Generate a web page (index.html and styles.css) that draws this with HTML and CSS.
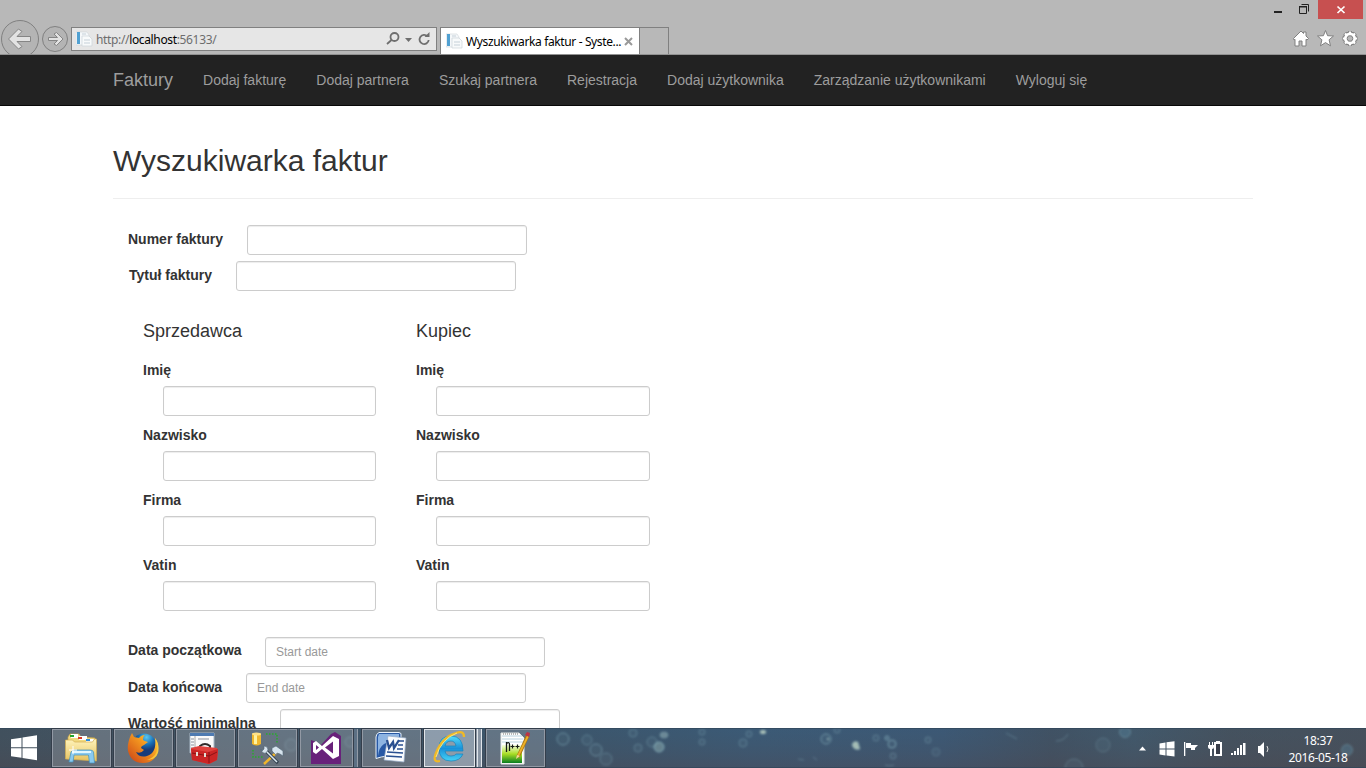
FILE: index.html
```html
<!DOCTYPE html>
<html lang="pl">
<head>
<meta charset="utf-8">
<title>Wyszukiwarka faktur</title>
<link rel="stylesheet" href="styles.css">
</head>
<body>
<div class="screen">
<header class="chrome">
  <div class="nav-buttons">
    <svg width="71" height="54" viewBox="0 0 71 54">
      <g fill="#b4b4b4" stroke="#808080"><circle cx="20" cy="39" r="18.5"/><circle cx="55" cy="39" r="12.5"/></g>
      <g fill="#e2e2e2" stroke="#858585" stroke-linejoin="round">
        <path d="M8.500 39l10-10 3.500 2.500-5 5h13.500v5H17l5 5-3.500 2.500z"/>
        <path d="M63 39l-6.500-6.500-2.500 1.500 3.500 3.500h-9v3h9L54 44l2.500 1.500z"/>
      </g>
    </svg>
  </div>
  <div class="address">
    <svg class="page-icon" width="17" height="16" viewBox="0 0 17 16"><path d="M0 1h11l2 3v10H0z" fill="#f5f8fa" stroke="#ced4d8" stroke-width=".6"/><path d="M1 1h3v12H1z" fill="#51a1d2"/><path d="M6 5h7l3 3v7H6z" fill="#f8fafb" stroke="#ccd3d8" stroke-width=".7"/><path d="M8 9h6M8 12h6M6 3h4" stroke="#c5d0d8"/></svg>
    <span class="url">http://<b>localhost</b>:56133/</span>
    <svg class="address-tools" width="50" height="22" viewBox="0 0 50 22"><g fill="none" stroke="#6e6e6e" stroke-width="1.800"><circle cx="8.500" cy="9" r="4"/><path d="M5.500 12L1 16"/><path d="M41.500 8.300A4.600 4.600 0 1 0 42.700 12"/></g><path d="M19 10h7l-3.500 4zM38.500 9h5V4z" fill="#6e6e6e"/></svg>
  </div>
  <div class="tab">
    <svg class="page-icon" width="17" height="16" viewBox="0 0 17 16"><path d="M0 1h11l2 3v10H0z" fill="#f5f8fa" stroke="#ced4d8" stroke-width=".6"/><path d="M1 1h3v12H1z" fill="#51a1d2"/><path d="M6 5h7l3 3v7H6z" fill="#f8fafb" stroke="#ccd3d8" stroke-width=".7"/><path d="M8 9h6M8 12h6M6 3h4" stroke="#c5d0d8"/></svg>
    <span class="tab-title">Wyszukiwarka faktur - Syste...</span>
    <svg class="tab-close" width="9" height="9" viewBox="0 0 9 9"><path d="M1 1l7 7M8 1L1 8" stroke="#999" stroke-width="2"/></svg>
  </div>
  <div class="new-tab"></div>
  <svg class="window-tools" width="126" height="54" viewBox="0 0 126 54">
    <path d="M78 0h45v19H78z" fill="#c75050"/>
    <path d="M34 11h8v2h-8z" fill="#222"/>
    <path d="M59.500 6.500h7v7h-7zM61.500 4.500h7v7" fill="none" stroke="#222"/><path d="M59 6h8v1.500h-8z" fill="#222"/>
    <path d="M97.500 6.500l7 6.500m0-6.500l-7 6.500" stroke="#fff" stroke-width="1.700"/>
    <g fill="#fff" stroke="#808080" stroke-linejoin="round">
      <path d="M53.500 38.500l7.500-7.500 2.500 2.500V32h2.500v4l2.500 2.500-1.500 1.500-1-.7V46h-4v-5h-3v5h-4v-6.700l-1 .7z"/>
      <path d="M85.500 30.500l2.100 5.200 5.900.3-4.400 3.800 1.400 6-5-3.200-5 3.200 1.400-6-4.400-3.800 5.900-.3z"/>
    </g>
    <g fill="none"><path d="M110 31v15M102.500 38.500h15M104.700 33.200l10.600 10.600M115.300 33.200l-10.600 10.600" stroke="#808080" stroke-width="4"/><circle cx="110" cy="38.500" r="4.800" stroke="#808080" stroke-width="4.500"/><path d="M110 31.500v14M103 38.500h14M105 33.500l10 10M115 33.500l-10 10" stroke="#fff" stroke-width="2.200"/><circle cx="110" cy="38.500" r="4.700" stroke="#fff" stroke-width="2.700"/></g><circle cx="110" cy="38.500" r="2.800" fill="#b8b8b8" stroke="#808080"/>
  </svg>
</header>

<main class="viewport">
  <nav class="navbar">
    <a class="brand">Faktury</a>
    <a>Dodaj fakturę</a><a>Dodaj partnera</a><a>Szukaj partnera</a><a>Rejestracja</a><a>Dodaj użytkownika</a><a>Zarządzanie użytkownikami</a><a>Wyloguj się</a>
  </nav>
  <section class="content">
    <h1>Wyszukiwarka faktur</h1>
    <form class="search">
      <div class="row number"><label>Numer faktury</label><input type="text"></div>
      <div class="row title"><label>Tytuł faktury</label><input type="text"></div>
      <div class="parties">
        <div class="party">
          <h2>Sprzedawca</h2>
          <div class="field"><label>Imię</label><input type="text"></div>
          <div class="field"><label>Nazwisko</label><input type="text"></div>
          <div class="field"><label>Firma</label><input type="text"></div>
          <div class="field"><label>Vatin</label><input type="text"></div>
        </div>
        <div class="party buyer">
          <h2>Kupiec</h2>
          <div class="field"><label>Imię</label><input type="text"></div>
          <div class="field"><label>Nazwisko</label><input type="text"></div>
          <div class="field"><label>Firma</label><input type="text"></div>
          <div class="field"><label>Vatin</label><input type="text"></div>
        </div>
      </div>
      <div class="row start"><label>Data początkowa</label><input type="text" placeholder="Start date"></div>
      <div class="row end"><label>Data końcowa</label><input type="text" placeholder="End date"></div>
      <div class="row minimum"><label>Wartość minimalna</label><input type="text"></div>
    </form>
  </section>
</main>

<footer class="taskbar">
  <svg class="wallpaper" width="1366" height="40" viewBox="0 0 1366 40">
    <defs>
      <linearGradient id="sea"><stop offset="0" stop-color="#424b57"/><stop offset=".2" stop-color="#435365"/><stop offset=".42" stop-color="#3b536c"/><stop offset=".55" stop-color="#3b5878"/><stop offset=".69" stop-color="#3c5677"/><stop offset=".77" stop-color="#414d60"/><stop offset=".83" stop-color="#43566a"/><stop offset=".9" stop-color="#474d59"/><stop offset="1" stop-color="#494b56"/></linearGradient>
      <linearGradient id="depth" x2="0" y2="1"><stop offset="0" stop-color="#3c6070" stop-opacity=".25"/><stop offset="1" stop-color="#4a4c55" stop-opacity=".5"/></linearGradient>
      <filter id="soft"><feGaussianBlur stdDeviation=".8"/></filter>
    </defs>
    <path d="M0 0h1366v40H0z" fill="url(#sea)"/><path d="M0 0h1366v40H0z" fill="url(#depth)"/>
    <g filter="url(#soft)" fill="#6794a4" fill-opacity=".1" stroke="#80a9b7" stroke-opacity=".42">
      <circle cx="291" cy="17" r="6"/><circle cx="350" cy="14" r="5"/><circle cx="563" cy="11" r="6" stroke-opacity=".65"/><circle cx="587" cy="12" r="5"/><circle cx="596" cy="22" r="6" stroke-opacity=".6"/><circle cx="606" cy="31" r="6"/><circle cx="633" cy="5" r="4"/><circle cx="638" cy="20" r="4"/><circle cx="652" cy="14" r="5"/><circle cx="702" cy="4" r="3"/><circle cx="702" cy="14" r="3"/><circle cx="749" cy="6" r="3"/><circle cx="743" cy="15" r="4"/><circle cx="826" cy="11" r="5" stroke-opacity=".7"/><circle cx="837" cy="2" r="3"/><circle cx="876" cy="10" r="3"/><circle cx="892" cy="16" r="4" stroke-opacity=".8"/><circle cx="893" cy="28" r="3"/><path d="M885 37q4 2 9 0"/><circle cx="928" cy="12" r="3"/><circle cx="936" cy="24" r="4" stroke-opacity=".25"/><circle cx="1103" cy="17" r="7" stroke-opacity=".3"/><circle cx="1074" cy="40" r="9" stroke-opacity=".35"/>
      <path d="M1006 5l11 6M1068 6q-4 7-12 7M798 31l6 1M813 29l4 3" fill="none"/>
      <ellipse cx="664" cy="7" rx="4" ry="3" fill="#9bbabc" fill-opacity=".5"/><circle cx="659" cy="19" r="5" fill="#8daeb1" fill-opacity=".5" stroke-opacity=".9"/><ellipse cx="763" cy="4" rx="3" ry="2" fill="#b6cabc" fill-opacity=".9"/><path d="M852 17q1-5 6-3l2 7q-6 2-8-4z" fill="#b0c8bd" fill-opacity=".9"/><circle cx="887" cy="10" r="2" stroke-opacity=".9"/><circle cx="828" cy="11" r="1" fill="#b6cabc" fill-opacity=".8"/>
      <circle cx="1125" cy="4" r="5.500" fill="#527e96" fill-opacity=".45"/><circle cx="1347" cy="22" r="5.500" fill="#527e96" fill-opacity=".45"/>
    </g>
    <g fill="none" stroke="#30465a" stroke-opacity=".7"><path d="M0 .5h1366M0 39.500h1366"/></g>
  </svg>
  <div class="start-button"><svg width="52" height="40" viewBox="0 0 52 40"><path d="M11 11.300l10.500-1.500v9.500H11zM22.500 9.600L37 7.300v12H22.500zM11 20.300h10.500v9.500L11 28.300zM22.500 20.300H37v12l-14.500-2.300z" fill="#fff"/></svg></div>
  <div class="apps">
    <div class="app"><svg width="58" height="40" viewBox="0 0 58 40"><defs><linearGradient id="folder" x2="0" y2="1"><stop stop-color="#fff4bc"/><stop offset="1" stop-color="#e6c260"/></linearGradient></defs><path d="M16 9l2-3h9l2 3 14 1v20H16z" fill="#f1d97f" stroke="#c7a348" stroke-width=".7"/><path d="M19 6h7v4h-7zM27 8h8v4h-8zM34 11h8v3h-8z" fill="#fff"/><path d="M18 7h4v2h-4z" fill="#25a52c"/><path d="M26 9h4v2h-4z" fill="#d93a27"/><path d="M34 11h4v2h-4z" fill="#2d8ddd"/><path d="M13.500 12h7l2 2h18l2-3h2v22l-31-2z" fill="url(#folder)" stroke="#d2ae51" stroke-width=".7"/><path d="M17 34l2-10q1-2 4-2h15q3 0 3.500 2l1 11h-5l-1-8H22l-1 7z" fill="#8acaf0" stroke="#4091bd" stroke-width=".7"/><path d="M20 24h19" stroke="#e1f7ff" stroke-width="2"/><path d="M21 18v8M17 22h8" stroke="#fff"/></svg></div>
    <div class="app"><svg width="58" height="40" viewBox="0 0 58 40"><defs><radialGradient id="globe" cx=".6" cy=".15"><stop stop-color="#5cc8ef"/><stop offset=".6" stop-color="#176fb6"/><stop offset="1" stop-color="#173c7b"/></radialGradient><linearGradient id="fox" x1="1" x2="0" y2="1"><stop stop-color="#ffe451"/><stop offset=".4" stop-color="#f59b20"/><stop offset="1" stop-color="#c93e16"/></linearGradient></defs><circle cx="30" cy="18" r="12.500" fill="url(#globe)"/><path d="M16 9q-3 8-2 14 3 12 15 12 13 0 15-14 1-6-3-11 2 15-8 18-8 2-11-4 5 2 8-2l-3-2q0-2 3-3l4-3q-4-1-5-2 0-4 2-5-4 0-6 3l-5-1-2-4z" fill="url(#fox)"/><path d="M41 10q7 17-8 22 14-1 11-16z" fill="#f7c83b"/></svg></div>
    <div class="app"><svg width="58" height="40" viewBox="0 0 58 40"><path d="M14 5h24v20H14z" fill="#fafafa" stroke="#a7b7c5"/><path d="M14 5h24v3H14z" fill="#4e7bb2"/><path d="M19 8v19" stroke="#aaa"/><path d="M15 11h3M15 14h3M15 17h3M15 20h3M22 11h11" stroke="#8b929e"/><path d="M24 20v-2q5-4 10 0v3" fill="none" stroke="#302a2a" stroke-width="2"/><path d="M15 20l8-2 18 2 1 3-1 9-8 4-17-4z" fill="#e0413d"/><path d="M15 21l17 3 10-3-1 11-8 4-17-4z" fill="#cb2525"/><path d="M16 25l17 3 8-4M33 24v11" fill="none" stroke="#8a1315"/><path d="M20 24h2v4h-2zM28 25h2v4h-2z" fill="#e4dfd5"/></svg></div>
    <div class="app"><svg width="58" height="40" viewBox="0 0 58 40"><path d="M14 6v10q4 3 9 0V6z" fill="#f1b82e"/><path d="M16 6h3v10h-3z" fill="#fff3a0"/><ellipse cx="18.500" cy="6" rx="4.500" ry="1.500" fill="#ffe287"/><path d="M28 6h11v10M15 22v7h11" fill="none" stroke="#28aa2c" stroke-width="1.500" stroke-dasharray="1.500 1.500"/><path d="M39 24L26 36" stroke="#f0b52b" stroke-width="2.500"/><path d="M27 22l13 13" stroke="#354352" stroke-width="3.200"/><path d="M27 22l12 12" stroke="#dce9f1" stroke-width="1.500"/><path d="M23 21q1 5 5 4l2-3q0-4-4-4v3l-2 2zM34 20l4-2 7 5v5l-3-2-3-1-1 2-4-4z" fill="#d7e4ee" stroke="#516576" stroke-width=".6"/></svg></div>
    <div class="app stacked"><svg width="52" height="40" viewBox="0 0 52 40"><path d="M11 12l5 2 5 3 10-11 4-2 6 4v28H11z" fill="#68217a"/><path fill-rule="evenodd" d="M13 15l3-2 6 5 11-10 6 3v17l-6 3-11-10-6 5-3-2zM16 17v5l3-2.500zM25 19.500l8 6v-12z" fill="#fff"/></svg></div>
    <div class="app"><svg width="58" height="40" viewBox="0 0 58 40"><path d="M17 4.500h20q3 0 2 4v17q-2 4-6 4-8-3-19 1V9q0-3 3-4.500z" fill="#2859a5" stroke="#edf5fb"/><path d="M17 6h20v3L22 16q-5 3-6 12V9z" fill="#8db4e2"/><path d="M26 8l18 2-2 24-20-2z" fill="#f9fbfd" stroke="#93a9c6" stroke-width=".7"/><path d="M25 12l2 8 4-6 1 6 5-8" fill="none" stroke="#294f90" stroke-width="2.300"/><path d="M37 13h5M36 17h5M35 21h6M25 24l16 1M24 28l16 1" stroke="#294f90" stroke-width="1.500"/></svg></div>
    <div class="app active"><svg width="50" height="40" viewBox="0 0 50 40"><defs><linearGradient id="ie" x2="0" y2="1"><stop stop-color="#54ddfb"/><stop offset=".5" stop-color="#1991d9"/><stop offset="1" stop-color="#45d2f6"/></linearGradient></defs><path fill-rule="evenodd" d="M39 23H21q1 5 6 5 4 0 5-2h7q-3 7-12 7-12 0-12-13Q15 8 27 8q12 0 12 15zM21 18h11q-1-5-5-5-5 0-6 5z" fill="url(#ie)" stroke="#1685bd" stroke-width=".7"/><path d="M16 33q-8 2-4-8Q18 9 32 5q8-3 8 4" fill="none" stroke="#f1b926" stroke-width="2.300"/><path d="M12 29Q17 11 33 5" fill="none" stroke="#ffe878"/></svg></div>
    <div class="app"><svg width="58" height="40" viewBox="0 0 58 40"><defs><linearGradient id="green" x2="0" y2="1"><stop stop-color="#f7ffe0"/><stop offset=".5" stop-color="#a9dd24"/><stop offset="1" stop-color="#087d20"/></linearGradient></defs><path d="M15 5h18l5 5v26H15z" fill="#fff" stroke="#e1e5e1"/><path d="M16 8h20M16 11h21M16 14h21" stroke="#b8d2dd"/><path d="M16 17h20v18H16z" fill="url(#green)"/><path d="M17 6h15" stroke="#777" stroke-dasharray="1 1"/><path d="M20.500 24V14M20.500 15.500q3-2 3 1V23" fill="none" stroke="#151a15" stroke-width="1.300"/><path d="M24.500 18.500h4m-2-2v4M29.500 18.500h4m-2-2v4" fill="none" stroke="#151a15" stroke-width="1.200"/><path d="M42 7L32 29" stroke="#ac7610" stroke-width="3.500"/><path d="M42 8L32 28" stroke="#eeb22a" stroke-width="1.800"/><path d="M41 4l3 1-1 4-4-2z" fill="#bd3444"/><path d="M30 31l1-4 3 1z" fill="#f7d79c"/></svg></div>
  </div>
  <div class="tray">
    <svg width="150" height="40" viewBox="0 0 150 40"><path d="M19 22.500l3.500-4 3.500 4z" fill="#fff"/><g fill="#fff"><path d="M39.500 15.500l6-1v6h-6zM46.500 14.300l8-1v7.200h-8zM39.500 21.500h6v6l-6-1zM46.500 21.500h8v7l-8-1z"/><path d="M64 14h1.300v14H64zM66 15h5v2h7l-3 3v2h-4v-2h-5zM111 25h2v2h-2zM114 23h2v4h-2zM117 20h2v7h-2zM120 17h2v10h-2zM123 15h2.500v12H123z"/><path d="M138 18h2l4-4v15l-4-4h-2z"/><path d="M94 14h2v-1h4v1h2v14h-8z"/><path d="M89 14h1v3h2v-3h1v3h1v2q0 2-2 2v7h-2v-7q-2 0-2-2v-2h1z"/></g><path d="M96 16h4v10h-4z" fill="#383d49"/><path d="M147 18q2 3 0 6" stroke="#ddd" fill="none"/></svg>
    <div class="clock"><span>18:37</span><span>2016-05-18</span></div>
  </div>
</footer>
</div>
</body>
</html>
```
FILE: styles.css
```css
* { box-sizing: border-box; }
body { margin: 0; overflow: hidden; font-family: "Liberation Sans", Arial, sans-serif; font-size: 14px; color: #333; }
svg { display: block; flex-shrink: 0; }
.screen { display: flex; flex-direction: column; width: 1366px; height: 768px; }
.chrome { display: flex; height: 55px; flex-shrink: 0; background: #b8b8b8; border-bottom: 1px solid #929292; font-family: "Noto Sans", sans-serif; font-size: 12px; }
.nav-buttons { width: 71px; }
.address { display: flex; align-items: center; width: 366px; height: 24px; margin-top: 27px; padding-left: 4px; background: #e6e6e6; border: 1px solid #808080; }
.url { margin-left: 3px; color: #6d6d6d; letter-spacing: -.35px; white-space: nowrap; }
.url b { color: #000; font-weight: 400; }
.address-tools { margin-left: auto; }
.tab { display: flex; align-items: center; width: 200px; height: 27px; margin: 27px 0 0 3px; padding: 0 5px; background: #fff; border: 1px solid #808080; border-bottom: 0; color: #000; }
.tab-title { width: 156px; margin-left: 3px; padding-top: 1px; white-space: nowrap; letter-spacing: -.37px; }
.tab-close { margin-left: 2px; }
.new-tab { width: 29px; height: 27px; margin-top: 27px; border: 1px solid #808080; border-width: 1px 1px 0 0; }
.window-tools { margin-left: auto; }
.viewport { height: 673px; overflow: hidden; background: #fff; }
.navbar { display: flex; height: 51px; padding-left: 98px; background: #222; border-bottom: 1px solid #080808; color: #9d9d9d; }
.navbar a { padding: 15px; line-height: 20px; white-space: nowrap; }
.navbar .brand { font-size: 18px; }
.content { width: 1140px; margin-left: 113px; }
h1 { height: 93px; margin: 0; padding-top: 38px; border-bottom: 1px solid #eee; font-size: 30px; font-weight: 400; line-height: 33px; }
.search { padding: 26px 0 0 15px; }
.row { display: flex; height: 30px; margin-bottom: 6px; }
label { font-weight: 700; line-height: 20px; white-space: nowrap; }
.row label { padding-top: 4px; }
input { width: 280px; height: 30px; padding: 5px 10px; border: 1px solid #ccc; border-radius: 3px; background: #fff; box-shadow: inset 0 1px 1px rgba(0,0,0,.075); font: 12px/18px "Liberation Sans", Arial, sans-serif; }
input::placeholder { color: #999; opacity: 1; }
.number label { width: 119px; }
.title label { width: 108px; padding-left: 1px; }
.start label { width: 137px; padding-top: 3px; }
.end label { width: 118px; }
.minimum label { width: 152px; }
.parties { display: flex; height: 340px; padding-left: 15px; }
.party { width: 273px; }
h2 { height: 63px; margin: 0; padding-top: 24px; font-size: 18px; font-weight: 400; line-height: 20px; }
.field { height: 65px; }
.field label { display: block; height: 26px; }
.field input { display: block; width: 213px; margin-left: 20px; }
.buyer .field input { width: 214px; }
.taskbar { display: flex; position: relative; height: 40px; color: #fff; overflow: hidden; }
.wallpaper { position: absolute; inset: 0; }
.start-button, .apps, .tray { position: relative; }
.apps { display: flex; gap: 4px; padding-top: 1px; }
.app { width: 59px; height: 38px; margin-right: -1px; border: 1px solid #9299a4; outline: 1px solid #343e4b; background: rgba(176,181,187,.32); }
.app svg { margin: -2px -1px; }
.stacked { width: 53px; margin-right: 5px; box-shadow: 4px 0 0 #5c7084, 5px 0 0 #939ba7; }
.active { width: 51px; margin-right: 7px; background: rgba(205,215,225,.55); border-color: #e1e5ea; box-shadow: 2px 0 #8995a4, 3px 0 #e1e5ea, 6px 0 #8995a4, 7px 0 #e1e5ea; }
.tray { display: flex; margin-left: auto; width: 246px; font-family: "Noto Sans", sans-serif; font-size: 12px; }
.clock { display: flex; flex-direction: column; width: 96px; padding-top: 4px; text-align: center; line-height: 17px; letter-spacing: -.35px; }
```
